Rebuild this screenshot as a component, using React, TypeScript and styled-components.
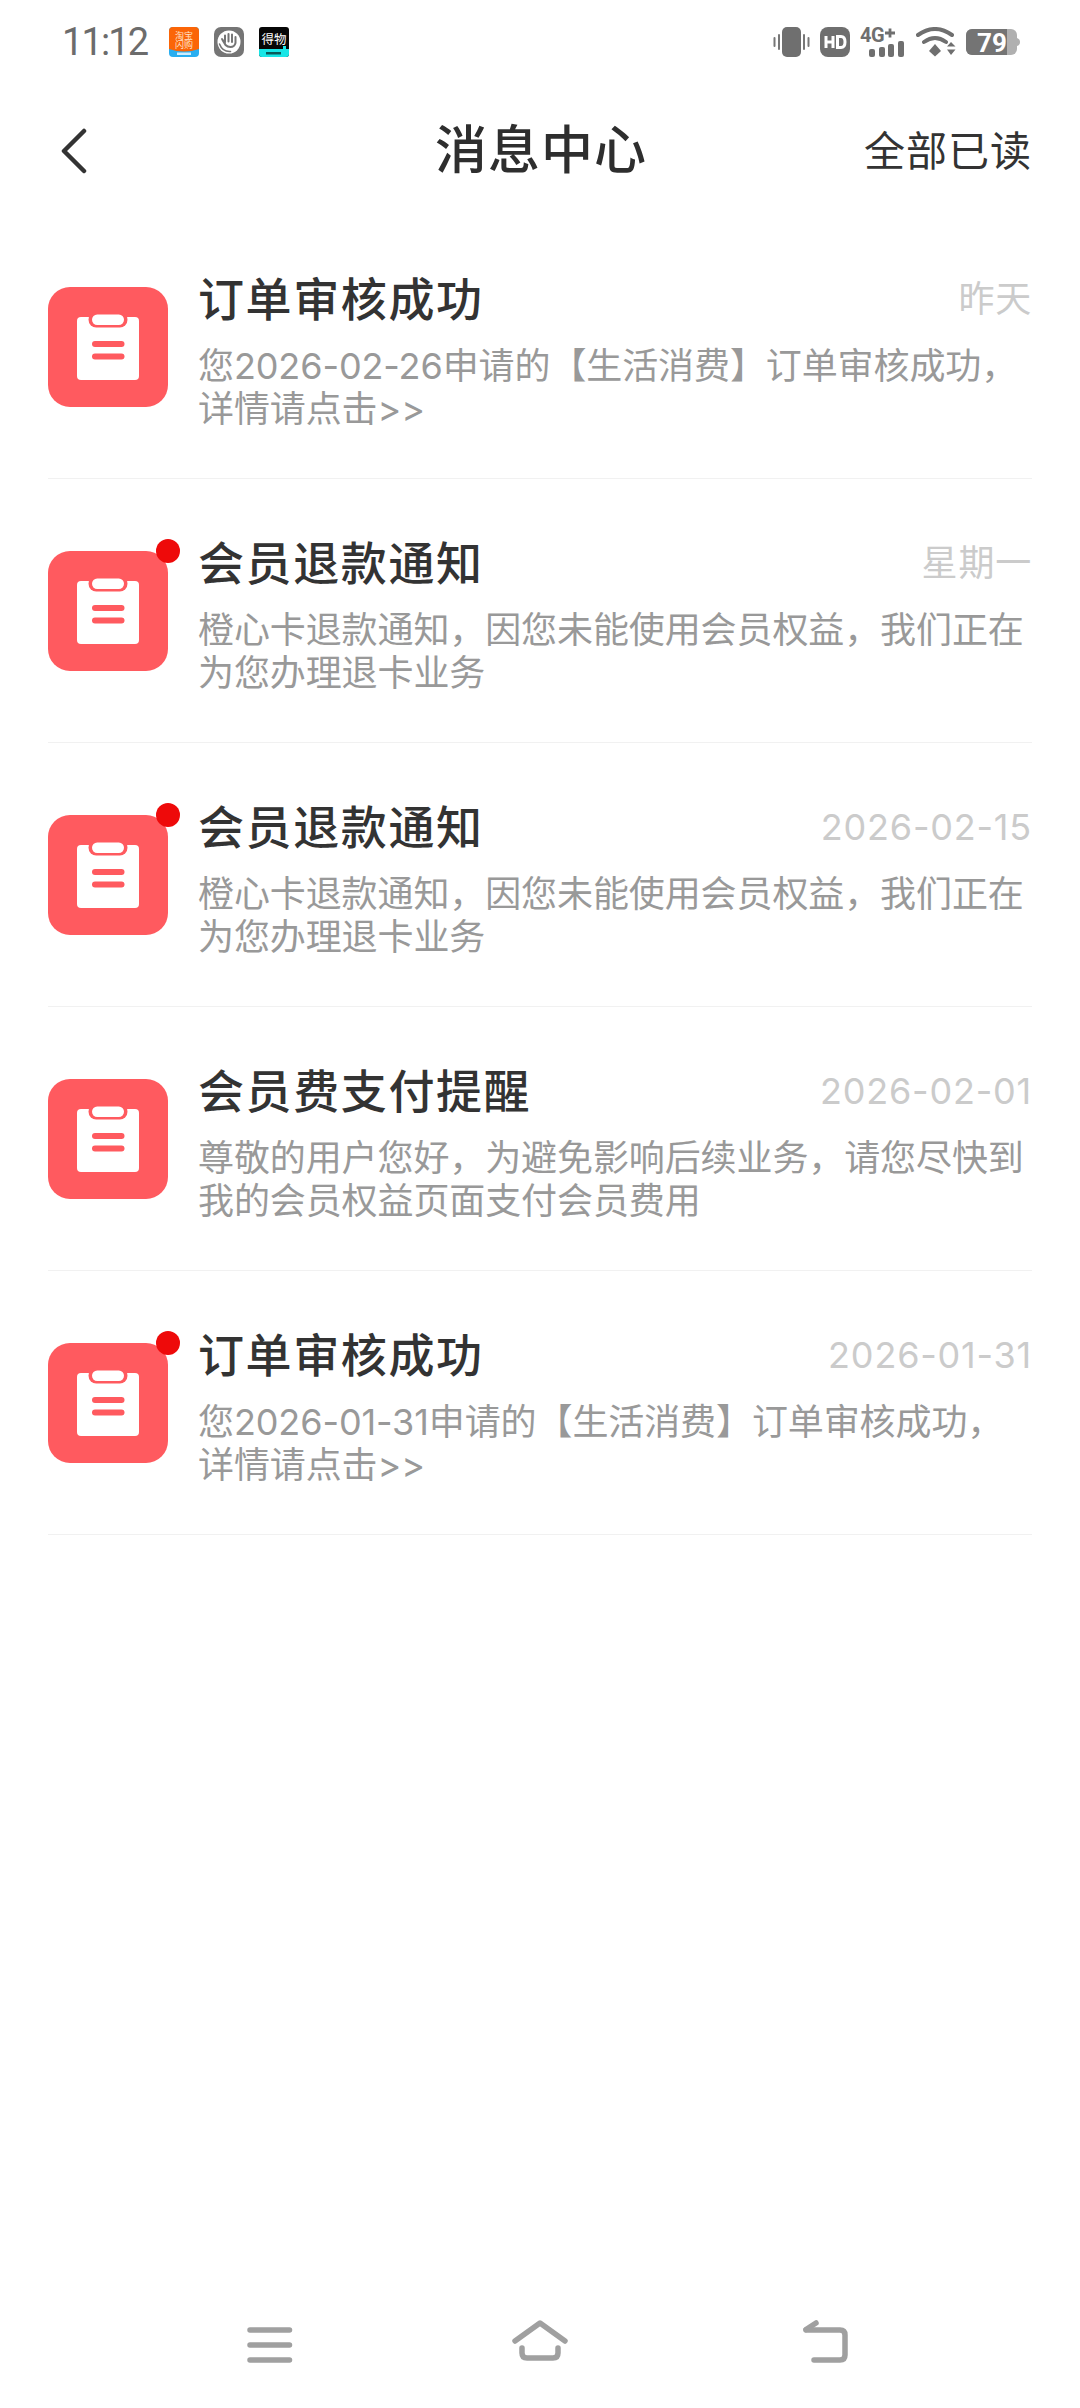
import React from "react";
import styled, { createGlobalStyle } from "styled-components";

const Global = createGlobalStyle`
  html, body { margin: 0; padding: 0; background: #fff; }
  body { font-family: "Inter", "Noto Sans CJK SC", "Noto Sans", sans-serif; }
`;

const Page = styled.div`
  width: 1080px;
  height: 2408px;
  display: flex;
  flex-direction: column;
  background: #fff;
  overflow: hidden;
`;

const StatusBar = styled.div`
  height: 30px;
  padding: 27px 60px 0 62px;
  display: flex;
  align-items: center;
  justify-content: space-between;
`;

const StatusGroup = styled.div<{ $gap: number }>`
  display: flex;
  align-items: center;
  gap: ${(p) => p.$gap}px;
`;

const Clock = styled.span`
  font-family: "Roboto", sans-serif;
  font-size: 38px;
  line-height: 36px;
  letter-spacing: -1.9px;
  color: #6c6c6c;
  width: 92px;
`;

const Header = styled.header`
  height: 158px;
  box-sizing: border-box;
  padding: 30px 48px 0;
  display: grid;
  grid-template-columns: 1fr auto 1fr;
  align-items: center;
`;

const BackButton = styled.svg`
  width: 28px;
  height: 46px;
  display: block;
  margin-left: 12px;
`;

const Title = styled.h1`
  margin: 0 0 0 2px;
  font-size: 52px;
  font-weight: 500;
  line-height: 70px;
  color: #2e2e2e;
  letter-spacing: 1px;
`;

const ReadAll = styled.span`
  justify-self: end;
  font-size: 41px;
  line-height: 56px;
  color: #333;
  letter-spacing: 1px;
`;

const List = styled.ul`
  list-style: none;
  margin: 0;
  padding: 0 48px;
  flex: 1;
`;

const Row = styled.li`
  height: 264px;
  box-sizing: border-box;
  border-bottom: 1px solid #f1f1f1;
  display: flex;
  align-items: center;
  gap: 30px;
`;

const IconWrap = styled.div`
  position: relative;
  width: 120px;
  height: 120px;
  flex: none;
`;

const Dot = styled.span`
  position: absolute;
  top: -12px;
  right: -12px;
  width: 24px;
  height: 24px;
  border-radius: 50%;
  background: #ee0a0a;
`;

const Content = styled.div`
  flex: 1;
  min-width: 0;
  padding-top: 6px;
  display: flex;
  flex-direction: column;
`;

const TitleLine = styled.div`
  display: flex;
  align-items: center;
  justify-content: space-between;
  height: 62px;
  margin-bottom: 15px;
`;

const RowTitle = styled.span`
  font-size: 46px;
  font-weight: 500;
  color: #333;
  letter-spacing: 1.6px;
  line-height: 62px;
`;

const RowTime = styled.span`
  font-size: 36px;
  color: #cbcbcb;
  letter-spacing: 0.8px;
  line-height: 50px;
`;

const Description = styled.p`
  margin: 0;
  font-size: 36px;
  line-height: 43px;
  color: #999;
  letter-spacing: -0.1px;
`;

const BottomNav = styled.nav`
  height: 120px;
  box-sizing: border-box;
  padding: 32px 0 0 244px;
  display: flex;
  align-items: flex-start;
`;

const NavIcon = styled.svg<{ $left: number }>`
  display: block;
  flex: none;
  margin-left: ${(p) => p.$left}px;
`;

const SignalSvg = styled.svg`
  display: block;
  margin-top: -4px;
`;

const ClipboardIcon = () => (
  <svg width="120" height="120" viewBox="0 0 120 120">
    <rect width="120" height="120" rx="22" fill="#ff5a5f" />
    <rect x="29" y="30" width="62" height="63" rx="4" fill="#fff" />
    <rect x="40.5" y="25" width="39" height="15.5" rx="7.7" fill="#ff5a5f" />
    <rect x="44" y="27.5" width="32" height="10.5" rx="5.2" fill="#fff" />
    <rect x="44" y="54" width="32.5" height="6" rx="3" fill="#ff5a5f" />
    <rect x="44" y="66.5" width="32.5" height="6" rx="3" fill="#ff5a5f" />
  </svg>
);

const TaobaoIcon = () => (
  <svg width="30" height="30" viewBox="0 0 30 30">
    <rect width="30" height="30" rx="4" fill="#29aef0" />
    <path d="M0 4a4 4 0 0 1 4-4h22a4 4 0 0 1 4 4v18q-15 5-30 0z" fill="#fb6507" />
    <text x="15" y="11.500" textAnchor="middle" fontSize="9" fill="#ffe3c9" fontFamily="Noto Sans CJK SC">淘宝</text>
    <text x="15" y="20.500" textAnchor="middle" fontSize="9" fill="#ffe3c9" fontFamily="Noto Sans CJK SC">闪购</text>
    <rect x="8" y="25.500" width="14" height="2.500" fill="#cdeeff" />
  </svg>
);

const HandIcon = () => (
  <svg width="30" height="30" viewBox="0 0 30 30">
    <rect width="30" height="30" rx="7" fill="#757575" />
    <circle cx="15" cy="15" r="11.500" fill="#fff" />
    <path d="M5.500 17q3 8 11 7.500" fill="none" stroke="#757575" strokeWidth="1.600" strokeLinecap="round" />
    <path d="M8 12l3 4M11 8.500v6.500M14.500 7v7.500M18 7.500v7.500M21.500 10v6q-1 4-5 4-3 0-5-2l-3-5" fill="none" stroke="#757575" strokeWidth="2" strokeLinecap="round" strokeLinejoin="round" />
  </svg>
);

const DewuIcon = () => (
  <svg width="30" height="30" viewBox="0 0 30 30">
    <rect width="30" height="30" rx="3" fill="#060606" />
    <path d="M0 22h30v5a3 3 0 0 1-3 3H3a3 3 0 0 1-3-3z" fill="#18e6e6" />
    <text x="15" y="17" textAnchor="middle" fontSize="12.500" fill="#fff" fontFamily="Noto Sans CJK SC">得物</text>
    <rect x="7" y="25" width="15" height="2.500" fill="#0a5a5a" />
    <rect x="24" y="19" width="3" height="4" fill="#18e6e6" />
  </svg>
);

const VibrateIcon = () => (
  <svg width="37" height="30" viewBox="0 0 37 30">
    <rect x="9" y="0" width="19" height="30" rx="5" fill="#6f6f6f" />
    <path d="M1.500 11v8M6 8v14M31 8v14M35.500 11v8" stroke="#777" strokeWidth="2" strokeLinecap="round" />
  </svg>
);

const HdIcon = () => (
  <svg width="30" height="30" viewBox="0 0 30 30">
    <rect width="30" height="30" rx="8" fill="#6f6f6f" />
    <path d="M6 9v12M13 9v12M6 15h7" stroke="#fff" strokeWidth="3" fill="none" />
    <path d="M17.500 9.500h3.500q4 0 4 5.500t-4 5.500h-3.500z" stroke="#fff" strokeWidth="3" fill="none" />
  </svg>
);

const SignalIcon = () => (
  <SignalSvg width="46" height="34" viewBox="0 -4 46 34">
    <text x="0" y="15" fontSize="20" fontWeight="700" letterSpacing="-0.5" fill="#6f6f6f" fontFamily="Roboto">4G</text>
    <path d="M25 6h10M30 1.500v9" stroke="#6f6f6f" strokeWidth="2.800" />
    <rect x="9" y="22" width="6" height="8" rx="2" fill="#6f6f6f" />
    <rect x="19" y="20" width="6" height="10" rx="2" fill="#6f6f6f" />
    <rect x="28" y="17" width="6" height="13" rx="2" fill="#6f6f6f" />
    <rect x="38" y="14" width="6" height="16" rx="2" fill="#6f6f6f" />
  </SignalSvg>
);

const WifiIcon = () => (
  <svg width="40" height="30" viewBox="0 0 40 30">
    <path d="M2 8q17-12 34 0M8 15q11-8 22 0" fill="none" stroke="#6f6f6f" strokeWidth="4" strokeLinecap="round" />
    <path d="M13 24l6-7 6 7-6 5.500z" fill="#6f6f6f" />
    <path d="M31 19.500l4-4.500 4.500 4.500zM31 22.500h8.500l-4.500 5.500z" fill="#6f6f6f" />
  </svg>
);

const BatteryIcon = () => (
  <svg width="54" height="30" viewBox="0 0 54 30">
    <rect width="51" height="26" y="2" rx="6" fill="#b0b0b0" />
    <path d="M6 2h35v26H6a6 6 0 0 1-6-6V8a6 6 0 0 1 6-6z" fill="#747474" />
    <path d="M51 11q3 1 3 4t-3 4z" fill="#b0b0b0" />
    <text x="26" y="24.500" textAnchor="middle" fontSize="26" fontWeight="700" fontFamily="Roboto" fill="#fff">79</text>
  </svg>
);

type Message = { title: string; time: string; text: string; unread: boolean };

const messages: Message[] = [
  { title: "订单审核成功", time: "昨天", text: "您2026-02-26申请的【生活消费】订单审核成功，详情请点击>>", unread: false },
  { title: "会员退款通知", time: "星期一", text: "橙心卡退款通知，因您未能使用会员权益，我们正在为您办理退卡业务", unread: true },
  { title: "会员退款通知", time: "2026-02-15", text: "橙心卡退款通知，因您未能使用会员权益，我们正在为您办理退卡业务", unread: true },
  { title: "会员费支付提醒", time: "2026-02-01", text: "尊敬的用户您好，为避免影响后续业务，请您尽快到我的会员权益页面支付会员费用", unread: false },
  { title: "订单审核成功", time: "2026-01-31", text: "您2026-01-31申请的【生活消费】订单审核成功，详情请点击>>", unread: true },
];

export default function App() {
  return (
    <Page>
      <Global />
      <StatusBar>
        <StatusGroup $gap={15}>
          <Clock>11:12</Clock>
          <TaobaoIcon />
          <HandIcon />
          <DewuIcon />
        </StatusGroup>
        <StatusGroup $gap={10}>
          <VibrateIcon />
          <HdIcon />
          <SignalIcon />
          <WifiIcon />
          <BatteryIcon />
        </StatusGroup>
      </StatusBar>
      <Header>
        <BackButton viewBox="0 0 28 46">
          <path d="M24 3 4 23l20 20" fill="none" stroke="#333" strokeWidth="4.500" strokeLinecap="round" strokeLinejoin="round" />
        </BackButton>
        <Title>消息中心</Title>
        <ReadAll>全部已读</ReadAll>
      </Header>
      <List>
        {messages.map((m, i) => (
          <Row key={i}>
            <IconWrap>
              <ClipboardIcon />
              {m.unread && <Dot />}
            </IconWrap>
            <Content>
              <TitleLine>
                <RowTitle>{m.title}</RowTitle>
                <RowTime>{m.time}</RowTime>
              </TitleLine>
              <Description>{m.text}</Description>
            </Content>
          </Row>
        ))}
      </List>
      <BottomNav>
        <NavIcon $left={0} width="51" height="46" viewBox="0 0 51 46">
          <path d="M6 10h39.500M6 25h39.500M6 40h39.500" stroke="#a0a0a0" strokeWidth="5.500" strokeLinecap="round" />
        </NavIcon>
        <NavIcon $left={215} width="60" height="46" viewBox="0 0 60 46">
          <path d="M5 21 30 3l25 18" fill="none" stroke="#a0a0a0" strokeWidth="5.500" strokeLinecap="round" strokeLinejoin="round" />
          <path d="M12 28v5q0 5 5 5h26q5 0 5-5v-5" fill="none" stroke="#a0a0a0" strokeWidth="5.500" strokeLinecap="round" />
        </NavIcon>
        <NavIcon $left={230} width="50" height="46" viewBox="0 0 50 46">
          <path d="M16 3 6 9.500" fill="none" stroke="#a0a0a0" strokeWidth="5.500" strokeLinecap="round" />
          <path d="M6 10h34q5 0 5 5v20q0 5-5 5H14" fill="none" stroke="#a0a0a0" strokeWidth="5.500" strokeLinecap="round" strokeLinejoin="round" />
        </NavIcon>
      </BottomNav>
    </Page>
  );
}
